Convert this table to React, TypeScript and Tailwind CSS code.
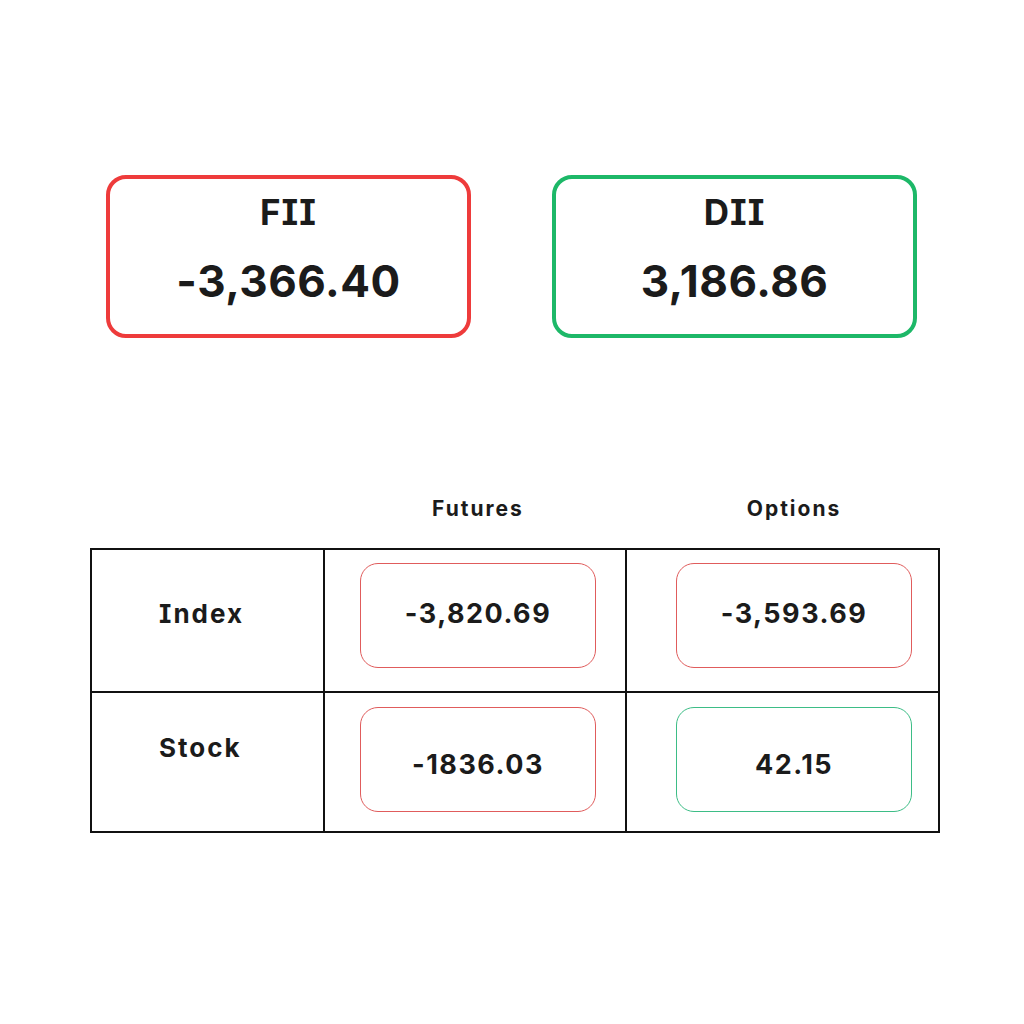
type Tone = "red" | "green";

function BigCard({ title, value, tone }: { title: string; value: string; tone: Tone }) {
  return (
    <div
      className={`flex h-[163px] w-[365px] flex-col items-center rounded-[20px] border-4 ${
        tone === "red" ? "border-[#ee3b3b]" : "border-[#1db868]"
      }`}
    >
      <div className="mt-[13px] text-[35px] font-bold leading-[40px] tracking-[1px] text-[#1b1b1b]">{title}</div>
      <div className="mt-[21px] text-[44px] font-bold leading-[56px] tracking-[0.5px] text-[#1b1b1b]">
        {value}
      </div>
    </div>
  );
}

function ValueBox({ value, tone, low }: { value: string; tone: Tone; low?: boolean }) {
  return (
    <div
      className={`flex h-[105px] w-[236px] justify-center rounded-[18px] border-[1.5px] ${
        tone === "red" ? "border-[#e05c5c]" : "border-[#3dbd86]"
      } ${low ? "items-end pb-[30px]" : "items-center pb-[3px]"}`}
    >
      <span className="text-[27px] font-bold leading-[32px] tracking-[1.5px] text-[#1b1b1b]">{value}</span>
    </div>
  );
}

export default function App() {
  return (
    <div className="h-[1024px] w-[1024px] bg-white font-['Inter','Liberation_Sans',sans-serif] [font-feature-settings:'cv08']">
      <div className="flex gap-[81px] pl-[106px] pt-[175px]">
        <BigCard title="FII" value="-3,366.40" tone="red" />
        <BigCard title="DII" value="3,186.86" tone="green" />
      </div>

      <div className="ml-[90px] mt-[158px] grid w-[848px] grid-cols-[233px_302px_313px]">
        <div />
        <div className="pl-[37px]">
          <div className="w-[236px] text-center text-[21px] font-bold leading-[26px] tracking-[2px] text-[#1b1b1b]">
            Futures
          </div>
        </div>
        <div className="pl-[51px]">
          <div className="w-[236px] text-center text-[21px] font-bold leading-[26px] tracking-[2px] text-[#1b1b1b]">
            Options
          </div>
        </div>
      </div>

      <div className="ml-[90px] mt-[26px] grid w-[850px] grid-cols-[233px_302px_311px] border-2 border-[#111]">
        <div className="h-[143px] border-b-2 border-r-2 border-[#111] pl-[67px] pt-[44px] text-[26px] font-bold tracking-[2px] text-[#1b1b1b]">
          Index
        </div>
        <div className="h-[143px] border-b-2 border-r-2 border-[#111] pl-[35px] pt-[13px]">
          <ValueBox value="-3,820.69" tone="red" />
        </div>
        <div className="h-[143px] border-b-2 border-[#111] pl-[49px] pt-[13px]">
          <ValueBox value="-3,593.69" tone="red" />
        </div>
        <div className="h-[138px] border-r-2 border-[#111] pl-[67px] pt-[35px] text-[26px] font-bold tracking-[2px] text-[#1b1b1b]">
          Stock
        </div>
        <div className="h-[138px] border-r-2 border-[#111] pl-[35px] pt-[14px]">
          <ValueBox value="-1836.03" tone="red" low />
        </div>
        <div className="h-[138px] pl-[49px] pt-[14px]">
          <ValueBox value="42.15" tone="green" low />
        </div>
      </div>
    </div>
  );
}
